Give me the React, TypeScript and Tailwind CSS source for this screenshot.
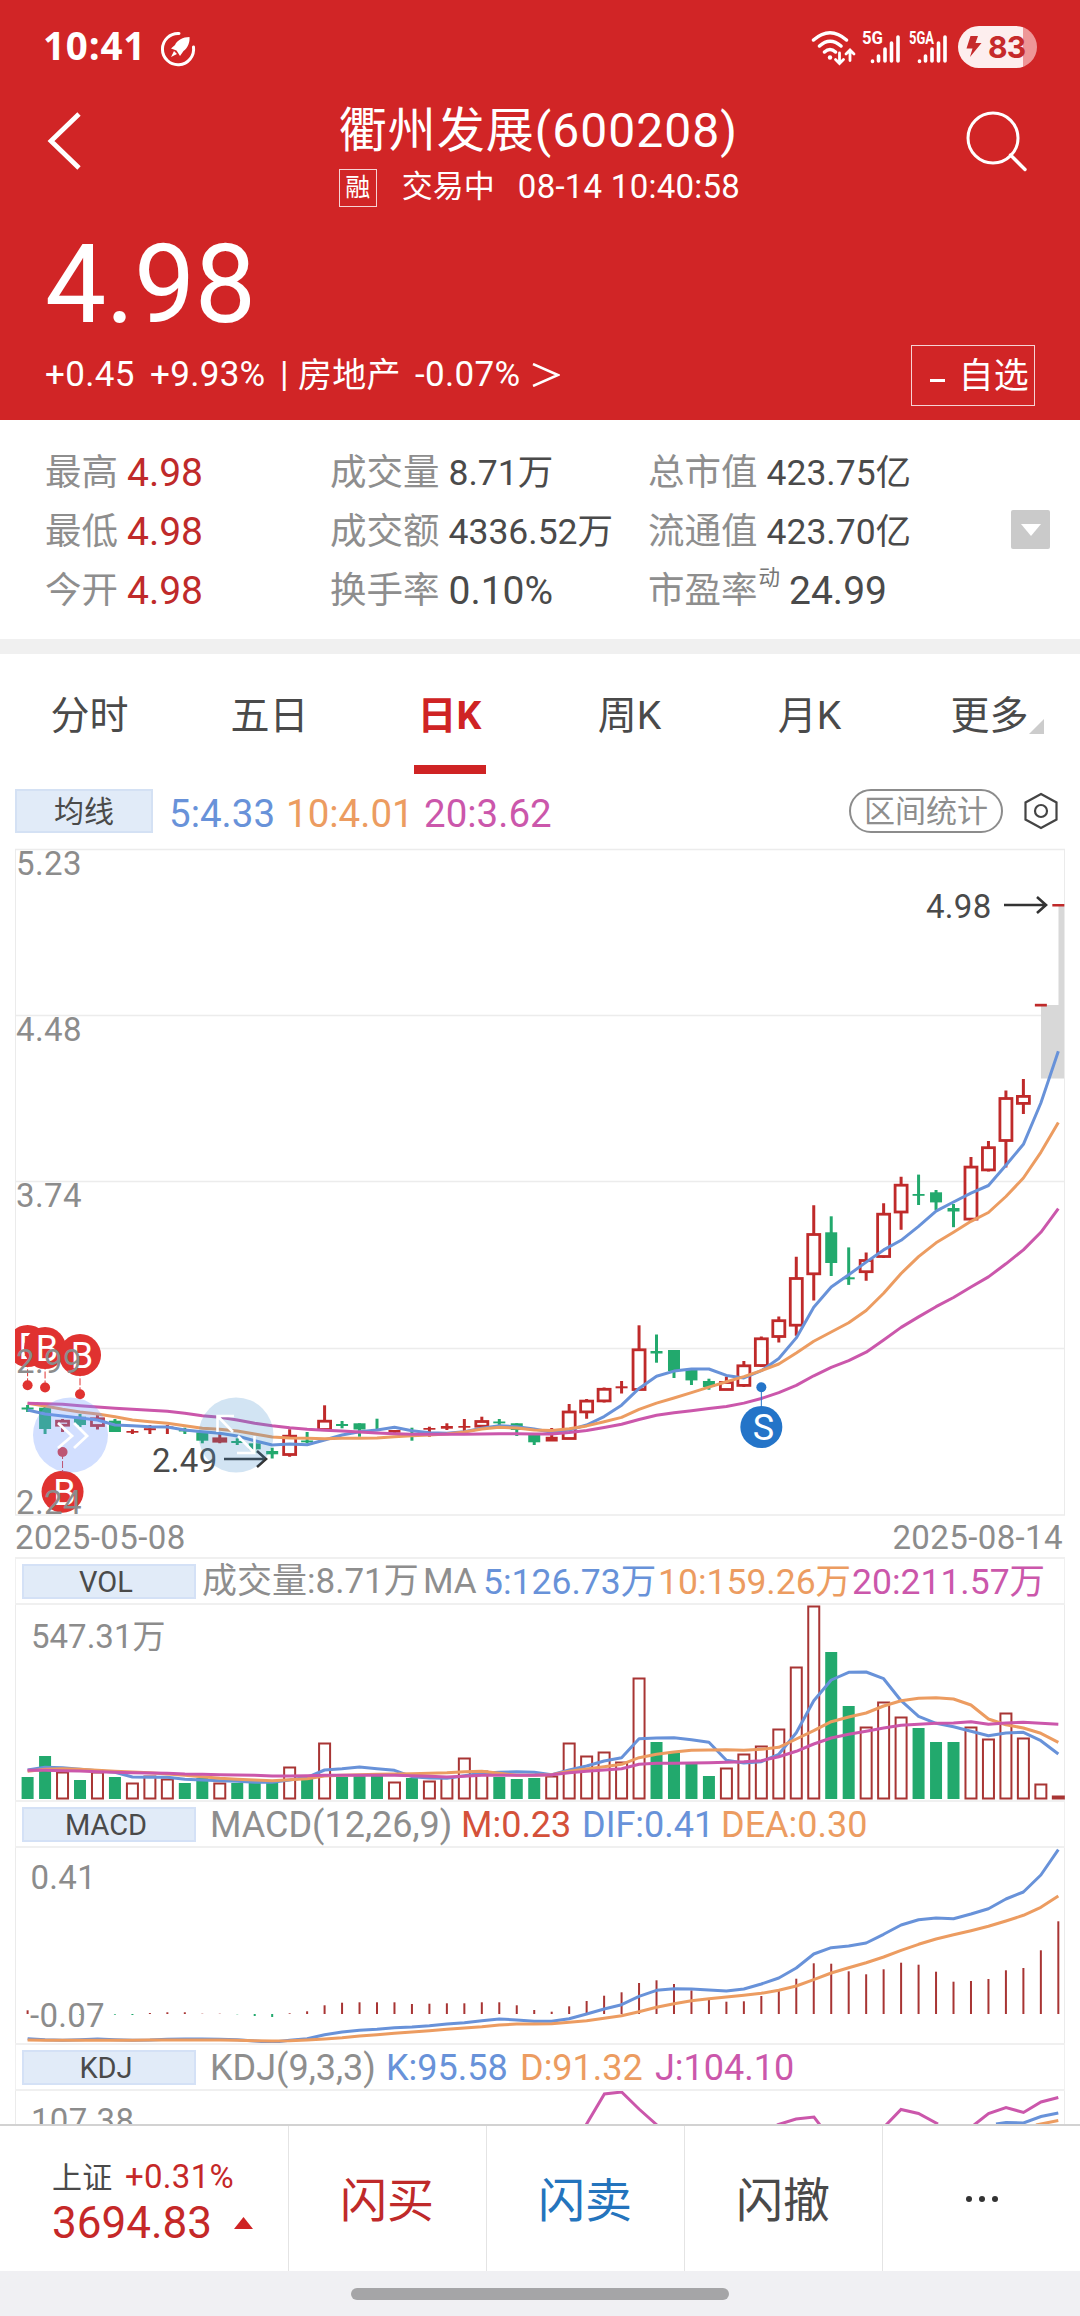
import { ReactNode } from "react";
import clsx from "clsx";

const RED = "#bf2a2a";
const GREEN = "#22a96d";
const BLUE = "#6892d9";
const ORANGE = "#ec9c61";
const PURPLE = "#cb57ab";

// x of the i-th trading day
const dayX = (i: number) => 27.6 + 17.47 * i;

type Candle = [kind: "r" | "g" | "R", top: number, bottom: number, high: number, low: number];

// r = hollow rise, R = flat/solid rise, g = fall
const candles: Candle[] = [
  ["g", 559.5, 561.5, 557, 564], ["g", 559.7, 581, 557, 586], ["r", 572.7, 577.7, 571, 584], ["g", 568.7, 577, 566, 579],
  ["r", 570.3, 578, 567, 581.5], ["g", 572.7, 584, 571, 584], ["R", 583, 584.7, 581.3, 586], ["R", 580.2, 582.2, 577, 586],
  ["R", 578.5, 579.5, 577, 586], ["g", 582, 583.5, 579.7, 586], ["g", 584.3, 592.7, 584, 595.3], ["r", 590.3, 593.7, 586, 595.3],
  ["g", 593, 595, 590.3, 597], ["g", 595.3, 601.3, 594, 605.3], ["g", 603, 606.3, 599.7, 610.5], ["r", 587.7, 607, 581.3, 608.7],
  ["g", 592.5, 594.3, 584, 595.3], ["r", 572.7, 582, 557.3, 582], ["g", 576, 578, 573, 580.3], ["g", 575.3, 581.5, 575.3, 588.7],
  ["g", 581, 582, 570.7, 582], ["R", 582, 584.7, 582, 585], ["g", 585, 586.5, 579.7, 592.7], ["R", 580, 581.7, 578.7, 588.7],
  ["R", 578, 580.7, 575.3, 582], ["R", 578, 579.7, 571, 585.3], ["r", 573, 578.7, 568.7, 578.7], ["g", 573.5, 575.3, 571, 577.7],
  ["g", 575.3, 582, 575.3, 588], ["g", 587, 594.3, 585, 597], ["R", 588.8, 593.5, 580, 593], ["r", 563.5, 591, 556, 591],
  ["r", 552.6, 564.4, 551, 570.7], ["r", 540.8, 553.4, 539.5, 554.5], ["R", 538.3, 540.3, 533, 545.5], ["r", 501.3, 542, 477.3, 542],
  ["g", 503, 505.5, 486.5, 514.7], ["g", 502, 523, 502, 530], ["g", 521.5, 532.4, 521, 537], ["g", 533, 539, 530.7, 541.7],
  ["r", 534, 542, 528.6, 542], ["r", 517.3, 537.9, 513, 539], ["r", 490.3, 518, 488.6, 519], ["r", 472.2, 489, 468.4, 494.5],
  ["r", 430, 477.7, 408.7, 487.8], ["r", 386, 426.3, 357.3, 452.4], ["g", 384.3, 415, 368.3, 428], ["g", 429.3, 431.3, 399.4, 436.9],
  ["r", 412, 424.2, 404.5, 432.7], ["r", 365.7, 409, 355.2, 410], ["r", 336.7, 364.5, 328.7, 381.7], ["g", 346, 347.8, 326.6, 357],
  ["g", 344.3, 354.4, 342, 362], ["g", 360, 363.5, 356, 379.2], ["r", 318.6, 371.6, 309, 373.7], ["r", 299.2, 322.4, 293, 323.6],
  ["r", 250, 293, 242.4, 319.4], ["r", 247.9, 255.9, 231, 266], ["R", 155.8, 158.5, 156, 158], ["R", 56, 58.5, 56, 58],
];

const ma5 = [
  562, 566, 568, 570, 572, 577, 577.7, 578.7, 579, 582, 583.7, 585.3, 588, 592.7, 597, 596, 596.7, 592, 587, 583.7,
  582, 579.3, 582.7, 584.7, 585.3, 583.7, 580.3, 577.7, 578.7, 581, 584.2, 582, 577, 568.6, 557.2, 540.4, 528.2, 523.1, 521, 521,
  527.4, 529.9, 522.7, 510.5, 489.9, 459.2, 439, 426.8, 414.1, 401.9, 392.3, 378.4, 363.2, 354, 345.1, 337.5, 317.3, 296.3, 255, 203.3,
];
const ma10 = [
  555.3, 558, 561.3, 564, 566, 568.7, 572, 573.7, 575.3, 577.7, 580.3, 581.3, 583, 586, 589, 590, 590.3, 590.7, 590.3, 590.3,
  590, 588.7, 587.7, 587, 586, 584, 581, 579.3, 580, 582, 582.5, 580.8, 577.9, 573.7, 569.4, 561.4, 555.1, 550, 544.6, 539.1,
  533.7, 528.6, 522.7, 516, 505, 493.3, 484, 474.7, 462.5, 445.3, 425.5, 408.7, 394.8, 384.3, 373.3, 364.5, 348.5, 330, 304.3, 274.4,
];
const ma20 = [
  555.3, 555.7, 556.3, 557.7, 559, 560.3, 561.3, 562.3, 563.3, 565.3, 567.7, 569.3, 572, 575.3, 577.7, 579.7, 581.3, 582.3, 583, 584,
  585, 585.7, 586.3, 586.3, 586.3, 586.3, 586, 585.7, 585.7, 586, 585.9, 584.6, 582.5, 579.5, 576.2, 571.5, 567.3, 564.8, 562.7, 560.6,
  558.5, 555.1, 550.5, 544.6, 537.4, 527.8, 519.4, 512.6, 504.2, 492, 479.4, 468.9, 458.7, 449.5, 439, 428.9, 415.8, 401.9, 384.3, 360.7,
];

const volumeTops = [
  172, 151, 167, 175, 167, 172, 178, 171, 174, 178, 173, 178, 178, 177, 178, 162, 174, 138, 172, 171,
  171, 177, 173, 176, 172, 153, 166, 172, 174, 173, 171, 138, 151, 147, 157, 73, 137, 148, 158, 171,
  163, 149, 141, 124, 62, 1, 47, 101, 122, 97, 112, 123, 137, 137, 122, 134, 108, 133, 179, 191,
];
const vol5 = [
  165, 162.3, 162.7, 164.3, 165.7, 167.3, 172, 172.3, 172.3, 174.3, 175, 175.7, 176.3, 177.3, 177.3, 175, 172.3, 165, 163.7, 162,
  163.7, 165.3, 171.7, 173, 173.3, 170.7, 168.3, 167.3, 166.7, 167.3, 169.7, 165, 161, 156, 152.7, 133.7, 133, 132.7, 134.7, 137.3,
  155.3, 158, 156.7, 149.3, 127.7, 95.7, 75, 67.3, 67, 73.7, 95.7, 111.3, 118.3, 121.7, 126.3, 130.7, 128, 127.3, 135.7, 149,
];
const vol10 = [
  166.3, 164.3, 163.7, 164.3, 165.3, 166.3, 167, 167.7, 169, 170.3, 171.7, 173.3, 174.3, 175, 175.7, 174.7, 173.7, 171, 170.3, 169.7,
  169.3, 169, 168.7, 168.3, 167.7, 166.7, 166.3, 168.3, 170.3, 170.3, 169.7, 166.3, 164, 161.7, 159.3, 152.7, 149.3, 147, 145.3, 145,
  144.7, 145.3, 144.3, 142.3, 134, 125.7, 116.7, 112, 108, 101, 95.7, 93.3, 92.7, 94, 100, 114, 119.7, 123, 128.3, 137.3,
];
const vol20 = [
  165.3, 165.3, 165.7, 166, 166.7, 167.3, 167.7, 168, 168.3, 169, 169.3, 169.7, 170, 170.3, 171, 171, 170.7, 170.3, 170.3, 170.3,
  170.3, 170.3, 170.7, 171.3, 172, 171.3, 170.3, 170.3, 170.3, 170.3, 169.7, 167.7, 166.3, 165, 163.7, 159.3, 158.3, 158.3, 158, 157.7,
  157.3, 156.7, 155.7, 151.7, 146.3, 139, 133, 129.3, 126.3, 123, 120.3, 119.3, 118.3, 118, 116.7, 119.3, 118, 117.3, 118.3, 119.3,
];

const macdBars = [
  3.7, 0, 0, -0.7, 1, -0.7, -1, 1, 1.7, 1.7, 0.3, 0.3, -0.3, -2, -3, 0.7, 2.7, 8.7, 11.3, 11.7,
  11.7, 11.7, 10, 10.3, 10.7, 10.7, 11.7, 11.7, 8.7, 4, 2.3, 7.7, 13, 18.3, 21.7, 31, 33.7, 30, 23.7, 15.7,
  12.3, 12.7, 18, 23.3, 35.3, 50.7, 50.3, 42.7, 39.7, 44.7, 51.3, 49.3, 42.3, 32.3, 33, 35, 43.7, 46, 63.7, 92.7,
];
const dif = [
  190.7, 191.7, 192.3, 191.7, 191, 191.7, 192.3, 192, 191.3, 191, 191, 191.3, 191.7, 193, 194.3, 192.3, 190.7, 186.7, 184, 182.3,
  181.3, 179.7, 179, 177.7, 176, 174.7, 172.7, 171, 172, 173.3, 173.3, 170.7, 166, 161, 156.7, 148.3, 142.3, 140.7, 141, 142,
  143, 141, 136, 130, 120, 106, 99.7, 98, 95, 86.3, 77, 71.7, 70, 70.7, 66, 60.7, 51, 44, 27, 1.7,
];
const dea = [
  192, 192.3, 192.3, 192.3, 192.3, 192.3, 192.3, 192, 192, 192, 192, 192, 192.3, 192.7, 193, 192.7, 192, 191, 189.7, 188,
  186.7, 185.3, 184, 182.7, 181.3, 180, 178.7, 177, 176, 176, 175.7, 174.3, 172.7, 170.3, 167.7, 163.7, 159.3, 155.7, 152.7, 150.7,
  149, 147.3, 145.3, 142.3, 138, 131.7, 125, 119.7, 114.7, 109, 102.3, 96.3, 91, 86.7, 82.7, 78.3, 73, 67.3, 59.3, 48,
];

function Series({ data, color }: { data: number[]; color: string }) {
  return (
    <polyline
      points={data.map((y, i) => `${dayX(i)},${y}`).join(" ")}
      fill="none"
      stroke={color}
      strokeWidth="3"
      strokeLinejoin="round"
    />
  );
}

function Frame({ height }: { height: number }) {
  return <path d={`M15.5 0V${height}M1064.5 0V${height}`} stroke="#ebebeb" />;
}

function Signal({ x = 0, bar, y, letter, color = "#e03230" }: { x?: number; bar: number; y: number; letter: string; color?: string }) {
  const cx = dayX(x);
  return (
    <g>
      <line x1={cx} x2={cx} y1={bar} y2={y} stroke={color} strokeDasharray={letter === "B" ? "7 2" : undefined} />
      <circle cx={cx} cy={bar} r="5" fill={color} />
      <circle cx={cx} cy={y} r="21" fill={color} />
      <text x={cx + 2} y={y + 13} fontSize="36" fill="#fff" textAnchor="middle">
        {letter}
      </text>
    </g>
  );
}

function StatusBar() {
  return (
    <div className="mb-[2px] flex h-[93px] items-center pl-[43px] pr-[43px]">
      <span className="w-[102px] font-['Open_Sans'] text-[38.500px] font-bold tracking-[0.8px] -mt-[2px]">10:41</span>
      <svg className="ml-[14px] mt-1" width="38" height="38" viewBox="0 0 38 38">
        <path d="M20 3.5A15.6 15.6 0 1 0 34.5 17" fill="none" stroke="#fff" strokeWidth="3" strokeLinecap="round" />
        <path d="M30.5 7C24 7 18 10.500 16 15L12 18.500L17.500 20.500L21 26L24.500 21C29 18 31 12 30.500 7ZM15 21L12 27L18 24Z" fill="#fff" />
      </svg>
      <div className="ml-auto flex items-center">
        <svg width="48" height="38" viewBox="0 0 48 38" fill="none" stroke="#fff" strokeLinecap="round">
          <path d="M3.500 12Q20 -2.500 36.500 12M9.500 18Q20 8.500 31 18M14.500 24Q20 19 25.500 24" strokeWidth="3.500" />
          <circle cx="20" cy="29.500" r="2.200" fill="#fff" stroke="none" />
          <path d="M29.500 25V35M25.500 31.500L29.500 35.500L33.500 31.500M40 32.500V22.500M36 26L40 22L44 26" strokeWidth="2.800" />
        </svg>
        <svg className="ml-[4px]" width="42" height="38" viewBox="0 0 42 38">
          <text x="0" y="15.500" fontSize="18" fontWeight="700" fill="#fff" textLength="21" lengthAdjust="spacingAndGlyphs">5G</text>
          <path d="M10.500 33V33.500M16.500 28V33M23 21V33M29.500 15V33M36 9V33" stroke="#fff" strokeWidth="3.600" strokeLinecap="round" />
        </svg>
        <svg className="ml-[5px]" width="42" height="38" viewBox="0 0 42 38">
          <text x="0" y="15.500" fontSize="18" fontWeight="700" fill="#fff" textLength="25" lengthAdjust="spacingAndGlyphs">5GA</text>
          <path d="M10.500 33V33.500M16.500 28V33M23 21V33M29.500 15V33M36 9V33" stroke="#fff" strokeWidth="3.600" strokeLinecap="round" />
        </svg>
        <div className="ml-[7px] flex h-[42px] w-[79px] items-center rounded-full bg-linear-to-r from-[#fdeeee] from-82% to-[#ee9697] to-82% pl-[8px] text-[#c62a2b]">
          <svg width="16" height="22" viewBox="0 0 16 22">
            <path d="M4.500 0H12L9.500 7H15.500L4 21L6.500 12.500H0.500Z" fill="#c62a2b" />
          </svg>
          <span className="ml-[6px] font-['Inter'] text-[30px] font-bold leading-none tracking-[-0.8px]">83</span>
        </div>
      </div>
    </div>
  );
}

function Header() {
  return (
    <header className="flex h-[420px] flex-none flex-col bg-[#d12526] text-white">
      <StatusBar />
      <div className="flex h-[125px] justify-between">
        <svg className="ml-[45px] mt-[15px]" width="40" height="62" viewBox="0 0 40 62">
          <path d="M34 4L6 31L34 58" fill="none" stroke="#fff" strokeWidth="4.800" />
        </svg>
        <div className="ml-[30px]">
          <h1 className="h-[67px] whitespace-nowrap pt-[3px] text-[48px] leading-[66px] tracking-[1px]">衢州发展(600208)</h1>
          <div className="flex h-[50px] items-center whitespace-nowrap">
            <span className="mt-[1px] flex h-[38px] w-[38px] items-center justify-center border border-white/80 text-[25px]">融</span>
            <span className="ml-[25px] w-[116px] text-[31px]">交易中</span>
            <span className="text-[33px] tracking-[0.25px]">08-14 10:40:58</span>
          </div>
        </div>
        <svg className="mr-[50px] mt-[14px]" width="66" height="66" viewBox="0 0 66 66" fill="none" stroke="#fff" strokeWidth="3">
          <circle cx="29" cy="29" r="25" />
          <path d="M46.500 46L61 60.500" strokeWidth="3.400" strokeLinecap="round" />
        </svg>
      </div>
      <div className="h-[125px] pl-[45px] pt-[11px] text-[109px] leading-[108px] tracking-[-0.5px]">4.98</div>
      <div className="flex h-[60px] items-center pl-[45px] pr-[45px] text-[35px] tracking-[0.3px] whitespace-nowrap">
        <span className="w-[105px]">+0.45</span>
        <span className="w-[130px]">+9.93%</span>
        <span className="w-[18px]">|</span>
        <span className="w-[117px] text-[34px]">房地产</span>
        <span>-0.07%</span>
        <svg className="ml-[12px]" width="28" height="24" viewBox="0 0 28 24">
          <path d="M1 1L26 12L1 23" fill="none" stroke="#fff" strokeWidth="2.500" />
        </svg>
        <span className="ml-auto flex h-[61px] w-[124px] items-center justify-end border border-white/80 pr-[5px] pt-[4px]">
          <i className="mr-[13px] mt-[6px] h-[3px] w-[15px] bg-white" />自选
        </span>
      </div>
    </header>
  );
}

function Stat({ label, value, sup, red, big }: { label: string; value: string; sup?: string; red?: boolean; big?: boolean }) {
  return (
    <div className="flex h-[59px] items-center whitespace-nowrap">
      <span className="text-[36.500px] text-[#8e8e8e]">{label}</span>
      {sup && <sup className="mb-[5px] ml-[1px] text-[21.500px] text-[#777]">{sup}</sup>}
      <span className={clsx("ml-[9px]", red ? "text-[#bf2a2a]" : "text-[#4a4a4a]", red || big ? "text-[39px]" : "text-[35.500px]")}>{value}</span>
    </div>
  );
}

function Quote() {
  return (
    <section className="flex h-[219px] flex-none pl-[45px] pt-[24px]">
      <div className="w-[285px]">
        <Stat label="最高" value="4.98" red />
        <Stat label="最低" value="4.98" red />
        <Stat label="今开" value="4.98" red />
      </div>
      <div className="w-[318px]">
        <Stat label="成交量" value="8.71万" />
        <Stat label="成交额" value="4336.52万" />
        <Stat label="换手率" value="0.10%" big />
      </div>
      <div className="w-[363px]">
        <Stat label="总市值" value="423.75亿" />
        <Stat label="流通值" value="423.70亿" />
        <Stat label="市盈率" value="24.99" sup="动" big />
      </div>
      <div className="mt-[66px] flex h-[39px] w-[39px] items-center justify-center rounded-[2px] bg-[#cacaca]">
        <svg width="20" height="12" viewBox="0 0 20 12"><path d="M0 0H20L10 12Z" fill="#fff" /></svg>
      </div>
    </section>
  );
}

function Tabs() {
  const tabs = ["分时", "五日", "日K", "周K", "月K", "更多"];
  return (
    <nav className="grid h-[135px] flex-none grid-cols-6 border-t-[15px] border-[#f0f0f0] text-[39px] text-[#4a4a4a]">
      {tabs.map((tab) => (
        <div key={tab} className={clsx("flex flex-col items-center pt-[31px]", tab === "日K" && "font-bold text-[#cf2324]")}>
          <span className="flex h-[62px] items-center pr-[1px]">
            {tab}
            {tab === "更多" && (
              <svg className="-mr-[15px] mt-[20px]" width="15" height="15" viewBox="0 0 15 15"><path d="M15 0V15H0Z" fill="#ccc" /></svg>
            )}
          </span>
          {tab === "日K" && <i className="mt-[18px] h-[9px] w-[72px] bg-[#cf2324]" />}
        </div>
      ))}
    </nav>
  );
}

function Averages() {
  return (
    <div className="flex h-[74px] flex-none items-start pl-[15px] pt-[15px] text-[38.500px] leading-[49px] whitespace-nowrap">
      <span className="h-[44px] w-[138px] border-2 border-[#d4e1f4] bg-[#e1ebf8] text-center text-[30px] leading-[42px] text-[#4a4a4a]">均线</span>
      <span className="ml-[16px] w-[117px] text-[#6892d9]">5:4.33</span>
      <span className="w-[138px] text-[#ec9c61]">10:4.01</span>
      <span className="text-[#cb57ab]">20:3.62</span>
      <span className="ml-auto h-[44px] w-[154px] rounded-full border-2 border-[#8c8c8c] text-center text-[31px] leading-[42px] text-[#8e8e8e]">区间统计</span>
      <svg className="ml-[20px] mr-[21px] mt-[3px]" width="36" height="38" viewBox="0 0 36 38" fill="none" stroke="#444" strokeWidth="2.200">
        <path d="M18 2L33.500 10.500V27.500L18 36L2.500 27.500V10.500Z" />
        <circle cx="18" cy="19" r="6" />
      </svg>
    </div>
  );
}

function PriceChart() {
  return (
    <svg className="block flex-none" width="1080" height="709" viewBox="0 0 1080 709" fontSize="33">
      <defs>
        <clipPath id="plot"><rect x="15" y="0" width="1050" height="668" /></clipPath>
      </defs>
      <path d="M15 1.500H1065M15 167.500H1065M15 333.500H1065M15 500.500H1065" stroke="#ececec" strokeWidth="1.500" />
      <path d="M15 667H1065" stroke="#f0f0f0" strokeWidth="2" />
      <path d="M15.500 1V667M1064.500 1V667" stroke="#ebebeb" />
      <rect x="1041" y="157" width="23" height="73.500" fill="#d8d8d8" />
      <rect x="1058.500" y="58" width="5.500" height="99" fill="#d8d8d8" />
      <g clipPath="url(#plot)">
        {candles.map(([kind, top, bottom, high, low], i) => {
          const x = dayX(i);
          const color = kind === "g" ? GREEN : RED;
          return (
            <g key={i} stroke={color} fill={color}>
              {kind === "r" ? (
                <>
                  <path d={`M${x} ${high}V${top}M${x} ${bottom}V${low}`} strokeWidth="3" />
                  <rect x={x - 6} y={top + 0.5} width="12" height={Math.max(bottom - top - 1, 2)} fill="#fff" strokeWidth="2.800" />
                </>
              ) : (
                <>
                  <path d={`M${x} ${high}V${low}`} strokeWidth="3" />
                  <rect x={x - 6} y={top} width="12" height={bottom - top} stroke="none" />
                </>
              )}
            </g>
          );
        })}
        <Series data={ma5} color={BLUE} />
        <Series data={ma10} color={ORANGE} />
        <Series data={ma20} color={PURPLE} />
        <Signal x={0} bar={537.3} y={498} letter="B" />
        <Signal x={1} bar={539.5} y={500} letter="B" />
        <Signal x={3} bar={546.3} y={507} letter="B" />
        <Signal x={2} bar={604} y={643.700} letter="B" />
        <Signal x={42} bar={539.3} y={579} letter="S" color="#2474c8" />
      </g>
      <g fill="#4a4a4a">
        <text x="152" y="624" letterSpacing="0.3">2.49</text>
        <text x="926" y="69.500" letterSpacing="0.3">4.98</text>
      </g>
      <path d="M224 611H266M257 603L266 611L257 619M1004 57H1046M1037 49L1046 57L1037 65" fill="none" stroke="#333" strokeWidth="2.600" />
      <g fill="#8c8c8c" letterSpacing="0.4">
        <text x="16" y="27">5.23</text>
        <text x="16" y="193">4.48</text>
        <text x="16" y="359">3.74</text>
        <text x="16" y="525">2.99</text>
        <text x="16" y="666">2.24</text>
        <text x="15" y="701">2025-05-08</text>
        <text x="1063" y="701" textAnchor="end">2025-08-14</text>
      </g>
      {/* floating controls */}
      <circle cx="70.500" cy="587" r="37.500" fill="#759dff" fillOpacity="0.33" />
      <path d="M58 575L72 588L58 600M74 575L87 588L74 600" fill="none" stroke="#fff" strokeWidth="2.800" />
      <circle cx="236" cy="587" r="37.500" fill="#4a93cf" fillOpacity="0.25" />
      <path d="M234 568H217.500V584M217.500 568L233 584M238 588L254.500 605M254.500 588V605H237" fill="none" stroke="#fff" strokeWidth="2.600" />
    </svg>
  );
}

function PanelHeader({ name, children }: { name: string; children: ReactNode }) {
  return (
    <div className="mx-[15px] flex h-[48px] flex-none items-center whitespace-nowrap border-x border-y-2 border-[#f0f0f0] pl-[6px] pt-[1px] text-[36px] leading-[44px] text-[#8e8e8e]">
      <span className="h-[35px] w-[174px] flex-none border-2 border-[#d4e1f6] bg-[#e1ebf8] pr-[6px] text-center text-[29px] leading-[33px] text-[#4a4a4a]">{name}</span>
      {children}
    </div>
  );
}

function VolumeChart() {
  return (
    <svg className="block flex-none" width="1080" height="195" viewBox="0 0 1080 195">
      <Frame height={195} />
      <text x="31" y="43" fontSize="33" fill="#8c8c8c">547.31万</text>
      {volumeTops.map((top, i) =>
        candles[i][0] === "g" ? (
          <rect key={i} x={dayX(i) - 6} y={top} width="12" height={194 - top} fill={GREEN} />
        ) : (
          <rect key={i} x={dayX(i) - 5.5} y={top + 0.5} width="11" height={193 - top} fill="#fff" stroke="#a83534" strokeWidth="2" />
        )
      )}
      <Series data={vol5} color={BLUE} />
      <Series data={vol10} color={ORANGE} />
      <Series data={vol20} color={PURPLE} />
    </svg>
  );
}

function MacdChart() {
  return (
    <svg className="block flex-none" width="1080" height="195" viewBox="0 0 1080 195">
      <Frame height={195} />
      {macdBars.map((h, i) => (
        <rect key={i} x={dayX(i) - 1} y={h > 0 ? 166 - h : 166} width="2" height={Math.abs(h)} fill={h > 0 ? "#a83534" : GREEN} />
      ))}
      <g fontSize="33" fill="#8c8c8c" letterSpacing="0.3">
        <text x="30.500" y="41">0.41</text>
        <text x="30" y="179">-0.07</text>
      </g>
      <Series data={dif} color={BLUE} />
      <Series data={dea} color={ORANGE} />
    </svg>
  );
}

function KdjChart() {
  return (
    <svg className="block flex-none" width="1080" height="33" viewBox="0 0 1080 33">
      <Frame height={33} />
      <text x="31" y="41" fontSize="33" fill="#8c8c8c" letterSpacing="0.3">107.38</text>
      <g fill="none" strokeWidth="3">
        <path
          d="M586 34L604.400 3L621.600 1L639 18L657 34M777 34L796 28L814 26L820 34M886 34L901 18.500L918.500 22.500L938 33M974 34L988.500 22.500L1006 16.500L1023.500 21.500L1041 11L1058.300 6.500"
          stroke={PURPLE}
        />
        <path d="M996 33L1006 31.500L1023.500 32L1041 25.500L1058.300 22" stroke={BLUE} />
        <path d="M1036 34L1058.300 29.500" stroke={ORANGE} />
      </g>
    </svg>
  );
}

function TradeBar() {
  return (
    <footer className="flex h-[147px] flex-none border-t-2 border-[#d2d2d2] bg-white text-[47px]">
      <div className="w-[289px] border-r border-[#e4e4e4] pl-[52px] pt-[31px] text-[#c52828]">
        <div className="flex h-[40px] items-center text-[33px] tracking-[0.3px]">
          <span className="w-[73px] text-[30px] text-[#4a4a4a]">上证</span>+0.31%
        </div>
        <div className="flex h-[50px] items-center pt-[2px] text-[44px]">
          3694.83
          <svg className="ml-[22px]" width="19" height="12" viewBox="0 0 19 12"><path d="M9.500 0L19 12H0Z" fill="#cf2324" /></svg>
        </div>
      </div>
      <button className="w-[198px] border-r border-[#e4e4e4] pt-[5px] pr-[1px] text-[#bf2a2a]">闪买</button>
      <button className="w-[198px] border-r border-[#e4e4e4] pt-[5px] pr-[1px] text-[#2474bd]">闪卖</button>
      <button className="w-[198px] border-r border-[#e4e4e4] pt-[5px] pr-[1px] text-[#4a4a4a]">闪撤</button>
      <div className="flex flex-1 items-center justify-center gap-[7px]">
        <i className="h-[6px] w-[6px] rounded-full bg-[#333]" />
        <i className="h-[6px] w-[6px] rounded-full bg-[#333]" />
        <i className="h-[6px] w-[6px] rounded-full bg-[#333]" />
      </div>
    </footer>
  );
}

export default function App() {
  return (
    <div className="flex h-[2316px] w-[1080px] flex-col overflow-hidden bg-white font-[Roboto,'Noto_Sans_CJK_SC',sans-serif]">
      <Header />
      <Quote />
      <Tabs />
      <Averages />
      <PriceChart />
      <PanelHeader name="VOL">
        <span className="ml-[6px] w-[221px] text-[35px]">成交量:8.71万</span>
        <span className="w-[60px] text-[35px]">MA</span>
        <span className="w-[175px] text-[35.500px] text-[#6892d9]">5:126.73万</span>
        <span className="w-[194px] text-[35.500px] text-[#ec9c61]">10:159.26万</span>
        <span className="text-[35.500px] text-[#cb57ab]">20:211.57万</span>
      </PanelHeader>
      <VolumeChart />
      <PanelHeader name="MACD">
        <span className="ml-[14px] w-[251px]">MACD(12,26,9)</span>
        <span className="w-[121px] text-[#d4513a]">M:0.23</span>
        <span className="w-[139px] text-[#6892d9]">DIF:0.41</span>
        <span className="text-[#ec9c61]">DEA:0.30</span>
      </PanelHeader>
      <MacdChart />
      <PanelHeader name="KDJ">
        <span className="ml-[14px] w-[176px]">KDJ(9,3,3)</span>
        <span className="w-[134px] text-[#6892d9]">K:95.58</span>
        <span className="w-[135px] text-[#ec9c61]">D:91.32</span>
        <span className="text-[#cb57ab]">J:104.10</span>
      </PanelHeader>
      <KdjChart />
      <TradeBar />
      <div className="flex flex-1 justify-center bg-[#f0f0f3] pt-[17px]">
        <i className="h-[12px] w-[378px] rounded-full bg-[#a5a5a7]" />
      </div>
    </div>
  );
}
